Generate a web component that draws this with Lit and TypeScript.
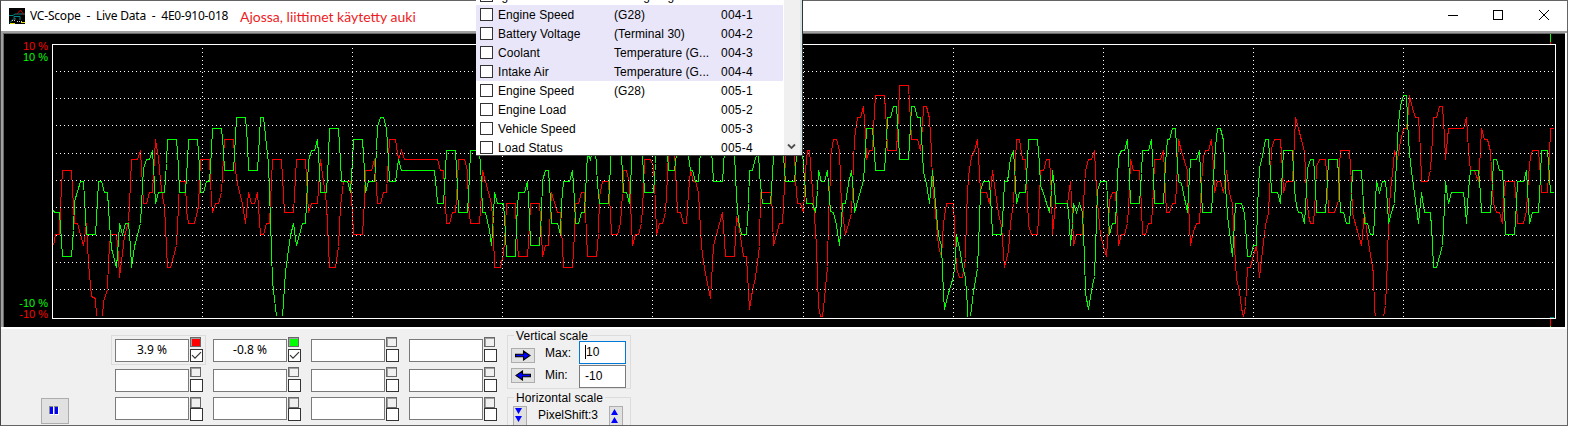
import { LitElement, html, svg, css } from "lit";
import { customElement } from "lit/decorators.js";

interface Block { x: number; y: number; pts: string; }

// Trace samples, grouped in blocks; units inside a block are thirds of a pixel.
// A bar marks a gap where the signal leaves the visible range.
const RED: Block[] = [
  { x: 40, y: 100, pts: "40,436 47,403 58,403 62,320 67,211 95,211 99,320 104,370 112,370 130,436 138,370 146,490 154,590 166,595 170,650 | 186,650 190,605 201,567 206,480 211,403 230,403 234,470 239,532 254,410 265,365 270,250 274,178 292,178 301,151 310,310 319,310 327,277 338,277 346,118 355,175 363,270 373,318 381,502 391,502 409,436 414,320 419,244 436,244 440,330 446,370 463,370 474,320 481,178 508,178 513,300 517,337 526,310 536,310 544,277 553,118 580,118 586,210 592,250 607,310 616,370 625,277 634,310 644,310 652,277 661,403 670,403 679,370 688,370 697,178 725,178 733,337 760,337 769,178 796,178 805,337 814,310" },
  { x: 310, y: 100, pts: "22,310 31,178 49,310 58,502 77,502 86,440 92,320 101,244 121,244 126,340 131,403 157,403 162,300 167,211 184,211 193,178 202,310 211,310 219,277 229,277 238,118 256,118 265,178 273,151 282,178 382,178 390,211 400,211 405,310 410,370 418,370 426,337 436,337 441,244 446,178 463,178 472,211 476,320 482,370 508,370 513,280 517,211 544,310 549,400 554,502 571,502 580,460 585,380 590,310 616,310 620,400 625,469 652,469 657,380 661,310 689,310 693,400 697,469 706,436 715,436 724,277 742,337 751,337 756,440 761,502 788,502 793,400 797,310 805,310" },
  { x: 580, y: 100, pts: "4,277 14,277 19,400 23,469 49,469 54,400 59,290 67,244 86,244 91,340 95,403 112,403 122,370 126,280 131,211 139,211 148,250 153,370 158,436 166,403 175,403 185,370 190,270 194,178 211,178 220,200 225,310 230,403 238,370 247,370 256,337 261,230 266,151 283,151 288,270 293,337 302,337 310,370 320,370 325,277 331,211 340,244 347,244 355,277 363,440 373,505 391,596 400,436 427,337 432,420 437,469 463,469 469,350 475,370 490,469 500,469 509,628 517,570 527,532 537,440 541,277 574,277 581,436 589,403 598,370 608,370 612,260 617,151 643,151 647,240 653,310 662,310 670,337 675,211 681,151 689,151 698,270 703,350 708,440 715,620 721,650 726,650 733,595 741,500 746,350" },
  { x: 830, y: 60, pts: "0,350 2,290 10,238 19,238 29,270 34,440 45,523 64,460 69,310 74,235 82,172 91,172 100,139 105,225 109,298 118,271 127,271 132,150 136,106 163,106 168,200 172,271 199,271 204,165 208,76 236,76 240,180 244,238 262,238 271,271 276,200 280,139 289,139 298,175 303,270 308,370 317,460 325,560 335,588 341,490 350,430 370,430 375,560 380,625 388,652 397,652 405,595 410,460 416,350 424,290 433,270 442,238 448,340 452,397 469,397 479,430 488,331 497,398 506,460 515,495 523,622 534,570 542,490 551,430 556,300 560,238 569,238 577,298 587,298 592,420 596,495 605,523 622,523 627,420 632,331 641,331 649,298 658,298 663,400 667,523 677,430 712,430 721,364 726,470 731,556 740,523 757,523 761,430 766,330 775,298 784,298" },
  { x: 1080, y: 60, pts: "44,271 49,390 54,460 62,525 79,588 85,500 89,420 97,397 106,397 111,490 116,556 124,523 133,523 142,490 147,390 151,298 160,331 179,331 184,440 188,523 196,523 205,490 214,490 219,390 223,298 241,298 250,271 256,400 260,457 268,457 277,430 287,430 291,320 295,238 305,275 321,330 326,430 331,556 340,515 349,490 359,490 364,370 369,290 376,271 386,271 394,238 399,320 403,397 412,364 421,364 431,397 439,331 448,400 457,430 463,560 468,655 478,695 484,745 491,770 495,740 502,622 511,622 520,585 528,556 539,652 548,570 556,495 566,457 570,340 575,265 583,238 602,238 606,330 611,397 620,364 638,364 642,240 647,172 656,205 665,240 674,275 679,400 684,465" },
  { x: 1310, y: 60, pts: "2,490 10,490 15,400 20,320 28,298 46,298 51,380 56,457 74,457 84,420 88,320 92,271 119,271 123,370 128,460 155,556 163,457 172,530 189,640 193,745 196,770 | 220,770 227,735 231,600 235,480 242,390 249,310 254,271 262,298 270,245 280,205 289,205 294,150 299,106 307,145 315,172 326,172 330,270 335,364 352,364 361,330 366,235 371,172 380,172 389,139 398,139 403,230 407,298 415,205 460,205 469,172 475,270 480,331 494,331 505,364 510,270 515,205 523,238 532,238 542,275 547,390 551,430 559,457 568,457 577,490 581,420 586,364 613,364 618,430 623,490 640,490 650,450 655,350 660,290 668,271 686,271 691,350 695,397 712,397 717,290 722,205 731,205" },
];

const GREEN: Block[] = [
  { x: 40, y: 100, pts: "40,331 42,337 58,337 63,420 68,469 95,469 99,390 104,305 121,244 130,244 135,350 139,403 166,403 171,300 175,244 183,244 192,277 202,277 207,370 213,445 229,502 234,420 239,370 247,403 256,370 265,370 270,440 275,502 283,440 301,370 306,260 311,205 319,178 328,178 337,151 342,250 347,310 355,277 373,277 378,190 382,118 409,118 414,200 419,277 436,277 441,180 446,118 473,118 477,200 482,277 489,277 499,244 508,244 513,150 518,85 544,85 549,150 554,211 580,211 585,110 590,52 616,52 621,130 626,211 652,211 657,110 662,52 671,52 686,190 691,360 697,545 709,650 | 728,650 737,515 751,405 760,370 769,436 787,370 797,370 801,250 806,180" },
  { x: 310, y: 100, pts: "4,151 13,151 22,118 27,210 32,277 49,277 54,170 59,85 86,85 91,180 95,244 113,244 121,277 126,180 131,118 157,118 162,210 167,277 175,244 193,244 198,150 203,80 211,52 220,52 229,85 234,180 238,244 256,244 265,178 274,211 373,211 378,270 383,310 400,310 405,210 410,151 436,151 441,260 446,337 473,337 478,230 482,151 508,151 513,250 517,337 526,337 538,390 544,436 549,350 553,277 561,310 580,310 585,400 590,469 616,469 620,370 626,277 643,277 652,244 657,350 661,436 689,436 694,340 698,240 706,211 715,211 720,300 725,370 742,370 750,403 755,310 761,244 778,244 787,211 792,300 797,370 806,370" },
  { x: 580, y: 100, pts: "4,337 13,337 18,220 23,160 31,178 36,151 47,151 52,250 59,310 86,310 91,200 95,118 122,118 127,220 131,277 139,277 148,310 153,200 158,118 184,118 189,220 194,277 220,277 225,190 230,118 256,118 262,160 266,211 283,211 288,160 293,118 320,118 328,190 331,211 338,211 347,244 355,244 360,150 365,118 391,118 397,190 401,244 428,244 433,150 440,100 458,100 464,160 470,290 475,360 483,403 500,403 504,310 509,211 517,211 526,175 535,155 539,220 546,310 572,310 577,220 582,118 608,118 613,210 617,244 643,244 649,165 655,118 666,151 671,200 680,310 697,310 706,337 711,270 716,211 724,244 734,244 742,211" },
  { x: 830, y: 60, pts: "0,455 10,457 20,495 29,556 34,480 38,430 46,430 54,370 64,331 69,400 74,457 82,425 101,362 105,270 110,205 127,205 132,280 137,331 163,331 168,240 172,172 181,172 190,139 199,139 204,230 209,298 235,298 240,200 245,139 253,139 262,172 271,172 277,280 281,338 290,370 298,430 307,331 316,430 325,525 334,555 340,700 344,748 353,710 370,650 375,600 379,523 389,565 397,615 406,655 411,740 413,770 | 421,770 431,695 442,625 447,480 451,390 460,364 479,364 484,460 488,523 515,523 520,430 524,364 532,364 542,295 551,271 556,370 560,430 568,397 586,397 591,300 596,238 622,238 628,310 632,375 640,400 658,457 663,390 667,331 672,380 677,430 712,430 717,490 721,556 726,490 730,430 739,457 748,430" },
  { x: 1080, y: 60, pts: "7,457 12,590 16,700 25,748 34,690 44,650 49,480 53,390 61,364 80,364 85,470 89,523 97,490 107,490 111,360 116,290 124,271 133,271 142,238 147,350 151,430 179,430 184,340 188,271 206,271 214,238 219,350 223,430 251,430 256,310 261,238 268,238 277,205 287,205 291,320 296,364 305,370 323,457 328,350 332,298 350,298 358,271 363,400 368,457 394,457 400,350 405,260 412,205 422,205 431,240 436,380 441,465 457,588 462,490 467,430 484,430 494,460 499,540 503,589 511,589 520,556 528,556 533,440 539,325 548,285 557,238 565,238 570,340 575,397 592,397 601,430 606,330 611,271 638,271 643,390 648,435 656,457 664,457 673,490 678,390 682,325" },
  { x: 1310, y: 60, pts: "2,298 10,298 15,380 20,457 46,457 51,360 56,298 82,298 87,390 92,457 100,457 109,490 118,490 123,400 128,331 155,331 160,430 164,490 172,490 181,523 190,523 195,420 199,364 208,397 217,364 226,364 231,430 236,490 244,457 254,430 258,300 264,190 272,135 280,106 289,106 295,240 300,310 325,490 330,430 334,397 344,457 361,457 366,550 371,622 379,622 398,555 403,440 407,364 415,430 424,397 460,397 465,450 470,490 475,390 480,331 506,331 511,400 515,457 541,457 546,370 551,298 559,298 568,331 577,331 582,440 587,523 613,523 618,430 623,364 641,364 649,331 654,440 659,490 667,457 686,457 691,350 695,271 713,271 718,350 722,397 731,397" },
];

function tracePath(blocks: Block[]): string {
  let d = "";
  let move = true;
  for (const b of blocks) {
    for (const tok of b.pts.split(" ")) {
      if (tok === "|") { move = true; continue; }
      const [px, py] = tok.split(",").map(Number);
      d += `${move ? "M" : "L"}${b.x + Math.floor(px / 3) + 0.5} ${b.y + Math.floor(py / 3) + 0.5}`;
      move = false;
    }
  }
  return d;
}

const H_LINES = [71, 98, 125, 153, 180, 207, 235, 262, 289];
const V_LINES = [202, 352, 502, 652, 803, 953, 1103, 1253, 1403];

@customElement("scope-plot")
class ScopePlot extends LitElement {
  static styles = css`
    :host { display: block; height: 293px; background: #000; }
    svg { display: block; }
    .axis { font: 11px "Liberation Sans", sans-serif; text-anchor: end; }
    .red { fill: #f00; }
    .green { fill: #0f0; }
    .line { fill: none; stroke-width: 1; }
  `;
  render() {
    return html`<svg width="1560" height="293" viewBox="4 34 1560 293">
      <g shape-rendering="crispEdges">
        <path class="line" stroke="#f00" d=${tracePath(RED)} />
        <path class="line" stroke="#0f0" d=${tracePath(GREEN)} />
        ${H_LINES.map((y) => svg`<path class="line" stroke="#fff" stroke-dasharray="1 3" d="M56 ${y + 0.5}H1554" />`)}
        ${V_LINES.map((x) => svg`<path class="line" stroke="#fff" stroke-dasharray="1 3" d="M${x + 0.5} 48V318" />`)}
        <path class="line" stroke="#0f0" d="M1550.5 34V42M1550.5 326V327" />
        <path class="line" stroke="#f00" d="M1550.5 42V44M1550.5 319V326" />
        <path class="line" stroke="#008080" d="M1550 317.5H1554" />
        <rect class="line" stroke="#fff" x="52.5" y="44.5" width="1503" height="274" />
      </g>
      <text class="axis red" x="48" y="50">10 %</text>
      <text class="axis green" x="48" y="61">10 %</text>
      <text class="axis green" x="48" y="307">-10 %</text>
      <text class="axis red" x="48" y="318">-10 %</text>
    </svg>`;
  }
}

const CHANNELS = [
  ["Ignition", "Timing Angle", "003-4", ""],
  ["Engine Speed", "(G28)", "004-1", "alt"],
  ["Battery Voltage", "(Terminal 30)", "004-2", "alt"],
  ["Coolant", "Temperature (G...", "004-3", "alt"],
  ["Intake Air", "Temperature (G...", "004-4", "alt"],
  ["Engine Speed", "(G28)", "005-1", ""],
  ["Engine Load", "", "005-2", ""],
  ["Vehicle Speed", "", "005-3", ""],
  ["Load Status", "", "005-4", ""],
];

@customElement("channel-list")
class ChannelList extends LitElement {
  static styles = css`
    :host { display: flex; box-sizing: border-box; width: 326px; height: 156px; overflow: hidden; background: #fff; border-bottom: 1px solid #444; font: 12px "Liberation Sans", sans-serif; color: #000; }
    .rows { width: 307px; margin: -14px 1px 0 0; flex: none; }
    .row { height: 19px; display: grid; grid-template-columns: 22px 116px 107px 1fr; grid-template-rows: 19px; align-items: center; line-height: 17px; white-space: pre; letter-spacing: 0.07px; }
    .txt { padding-top: 2px; }
    .num { letter-spacing: 0.22px; }
    .alt { background: #e8e6f8; }
    .box { width: 11px; height: 11px; border: 1px solid #333; background: #fff; margin-left: 4px; }
    .bar { width: 16px; background: #f0f0f0; display: flex; align-items: flex-end; }
    .bar svg { display: block; margin: 0 0 4px 3px; }
    .edge { width: 2px; background: #d5e3e3; }
  `;
  render() {
    return html`<div class="rows">${CHANNELS.map(
      ([a, b, c, k]) => html`<div class="row ${k}"><span class="box"></span><span class="txt">${a}</span><span class="txt">${b}</span><span class="txt num">${c}</span></div>`
    )}</div>
    <div class="bar"><svg width="9" height="8" viewBox="0 0 9 8"><path d="M1 1.5 4.5 5 8 1.5" fill="none" stroke="#505050" stroke-width="1.8" /></svg></div>
    <div class="edge"></div>`;
  }
}

@customElement("value-cell")
class ValueCell extends LitElement {
  static properties = { value: {}, swatch: {}, row: { type: Number } };
  declare value: string;
  declare swatch: string;
  declare row: number;
  static styles = css`
    :host { display: flex; width: 98px; gap: 1px; }
    .field { box-sizing: border-box; width: 74px; height: 23px; border: 1px solid #7a7a7a; background: #fff; text-align: center; font: 12px/19px "Noto Sans", sans-serif; }
    .side { margin-top: -2px; display: flex; flex-direction: column; gap: 2px; }
    .tight { margin-top: 0; gap: 0; }
    .sw { box-sizing: border-box; width: 11px; height: 10px; border: 1px solid #696969; box-shadow: inset 1px 1px 0 #a0a0a0; background: #f0f0f0; }
    .tight .sw { height: 11px; }
    .red { background: #f00; }
    .green { background: #0f0; }
    .chk { box-sizing: border-box; width: 13px; height: 13px; border: 1px solid #333; background: #fff; }
    .chk svg { display: block; }
  `;
  render() {
    return html`<div class="field">${this.value}</div>
      <div class="side ${this.row === 2 ? "tight" : ""}">
        <div class="sw ${this.swatch}"></div>
        <div class="chk">${this.value
          ? html`<svg width="11" height="11" viewBox="0 0 11 11"><path d="M1 5.2 4 8.2 10 2.2" fill="none" stroke="#333" stroke-width="1.2" /></svg>`
          : ""}</div>
      </div>`;
  }
}

@customElement("app-root")
class AppRoot extends LitElement {
  static styles = css`
    :host { display: block; width: 1569px; height: 428px; overflow: hidden; position: relative; background: #fff; font: 12px "Liberation Sans", sans-serif; color: #000; }
    .window { box-sizing: border-box; width: 1568px; height: 426px; border: 1px solid #646464; border-left-color: #444; display: flex; flex-direction: column; overflow: hidden; }
    .title { height: 30px; display: flex; align-items: center; background: #fff; flex: none; }
    .logo { margin: -1px 5px 0 8px; display: block; }
    .name { width: 210px; font: 12px "Noto Sans", sans-serif; letter-spacing: -0.21px; white-space: pre; padding-bottom: 1px; }
    .note { font: 14px Lato, sans-serif; color: #ed1c24; flex: 1; white-space: pre; padding-top: 1px; }
    .frame { border: solid; border-width: 2px 0 0 2px; border-color: #a0a0a0; background: #fff; padding-right: 2px; flex: none; }
    .sunken { border: solid #696969; border-width: 1px 0 0 1px; }
    .panel { background: #f0f0f0; flex: 1; margin-top: 2px; display: flex; align-items: flex-start; }
    .pause { box-sizing: border-box; margin: 69px 42px 0 40px; width: 28px; height: 26px; border: 1px solid #adadad; background: #e1e1e1; }
    .pause svg { display: block; margin: 7px 0 0 7px; }
    .cells { width: 396px; display: grid; grid-template-columns: repeat(4, 98px); grid-template-rows: 30px 28px 24px; padding-top: 6px; }
    .focus { box-sizing: border-box; border: 1px solid #dcdcdc; width: 95px; height: 30px; padding: 3px; margin-top: 0; }
    .cell { padding: 4px 0 0 4px; }
    .scales { display: flex; flex-direction: column; gap: 8px; padding-top: 6px; }
    .group { box-sizing: border-box; width: 124px; height: 54px; border: 1px solid #dcdcdc; display: flex; flex-direction: column; }
    .legend { align-self: flex-start; background: #f0f0f0; margin: -7px 0 0 6px; padding: 0 2px; line-height: 14px; height: 14px; letter-spacing: 0.1px; white-space: pre; flex: none; }
    .line { display: flex; height: 24px; flex: none; }
    .line.first { margin-top: -2px; }
    .btn { box-sizing: border-box; width: 24px; height: 15px; border: 1px solid #adadad; background: #e1e1e1; margin: 7px 0 0 3px; display: flex; align-items: center; justify-content: center; }
    .second .btn { margin-top: 3px; }
    .lab { width: 34px; margin-left: 10px; line-height: 24px; }
    .second .lab { line-height: 20px; }
    .input { box-sizing: border-box; width: 47px; height: 23px; border: 1px solid #7a7a7a; background: #fff; padding-left: 5px; line-height: 21px; display: flex; }
    .active { border-color: #0078d7; }
    .caret { width: 1px; height: 14px; background: #000; margin: 3px 0 0; }
    .shift { display: flex; margin-top: 1px; }
    .small { box-sizing: border-box; width: 14px; height: 20px; border: 1px solid #adadad; background: #e1e1e1; margin-left: 5px; }
    .px { width: 66px; margin-left: 11px; line-height: 18px; letter-spacing: 0; }
    .popup { position: absolute; left: 476px; top: 0; box-shadow: 1px 0 0 #333; }
    .ctl { display: block; flex: none; }
  `;

  private arrow(left: boolean) {
    return html`<svg width="16" height="11" viewBox="0 0 16 11"><path d=${left ? "M15.5 4.2H7.5V1L1 5.5 7.5 10V6.8H15.5Z" : "M.5 4.2H8.5V1L15 5.5 8.5 10V6.8H.5Z"} fill="#00f" stroke="#000" stroke-width="1.1" /></svg>`;
  }

  private cells() {
    const out = [];
    for (let i = 0; i < 12; i++) {
      const value = i === 0 ? "3.9 %" : i === 1 ? "-0.8 %" : "";
      const swatch = i === 0 ? "red" : i === 1 ? "green" : "";
      out.push(html`<div class=${i === 0 ? "focus" : "cell"}><value-cell .value=${value} .swatch=${swatch} .row=${Math.floor(i / 4)}></value-cell></div>`);
    }
    return out;
  }

  render() {
    return html`
      <div class="window">
        <div class="title">
          <svg class="logo" width="16" height="16" viewBox="0 0 16 16">
            <rect width="16" height="16" fill="#000" />
            <path d="M0 7.5H4L6 6H16M1 14.5 5 10.5V8.5H11V12" fill="none" stroke="#088" />
            <path d="M8 6 11.5 2 15 7" fill="none" stroke="#c00" />
            <path d="M3 12.5H6V9.5M8 13.5H13" fill="none" stroke="#ccc" stroke-dasharray="1 1" />
            <path d="M1 15.5H6M12 14.5H16" fill="none" stroke="#dd0" />
          </svg>
          <div class="name">VC-Scope  -  Live Data  -  4E0-910-018</div>
          <div class="note">Ajossa, liittimet käytetty auki</div>
          <svg class="ctl" width="45" height="20" viewBox="0 0 45 20"><path d="M0 9.5H10" stroke="#000" /></svg>
          <svg class="ctl" width="46" height="20" viewBox="0 0 46 20"><rect x=".5" y="4.5" width="9" height="9" fill="none" stroke="#000" /></svg>
          <svg class="ctl" width="28" height="20" viewBox="0 0 28 20"><path d="M0 4 10 14M10 4 0 14" stroke="#000" /></svg>
        </div>
        <div class="frame"><div class="sunken"><scope-plot></scope-plot></div></div>
        <div class="panel">
          <div class="pause"><svg width="10" height="9" viewBox="0 0 10 9" shape-rendering="crispEdges"><path d="M0 0H4V8H0ZM5 0H9V8H5Z" fill="#888" /><path d="M1 1H4V8H1ZM6 1H9V8H6Z" fill="#00f" /><path d="M1 8H5V9H1ZM6 8H10V9H6ZM4 1H5V8H4ZM9 1H10V8H9Z" fill="#fff" /></svg></div>
          <div class="cells">${this.cells()}</div>
          <div class="scales">
            <div class="group">
              <div class="legend">Vertical scale</div>
              <div class="line first"><div class="btn">${this.arrow(false)}</div><div class="lab">Max:</div><div class="input active"><span class="caret"></span>10</div></div>
              <div class="line second"><div class="btn">${this.arrow(true)}</div><div class="lab">Min:</div><div class="input">-10</div></div>
            </div>
            <div class="group">
              <div class="legend">Horizontal scale</div>
              <div class="shift">
                <div class="small"><svg width="9" height="17" viewBox="0 0 9 17"><path d="M1 1H8L4.5 7ZM1 9H8L4.5 15Z" fill="#00f" /></svg></div>
                <div class="px">PixelShift:3</div>
                <div class="small"><svg width="9" height="17" viewBox="0 0 9 17"><path d="M1 8H8L4.5 2ZM1 16H8L4.5 10Z" fill="#00f" /></svg></div>
              </div>
            </div>
          </div>
        </div>
      </div>
      <channel-list class="popup"></channel-list>
    `;
  }
}
